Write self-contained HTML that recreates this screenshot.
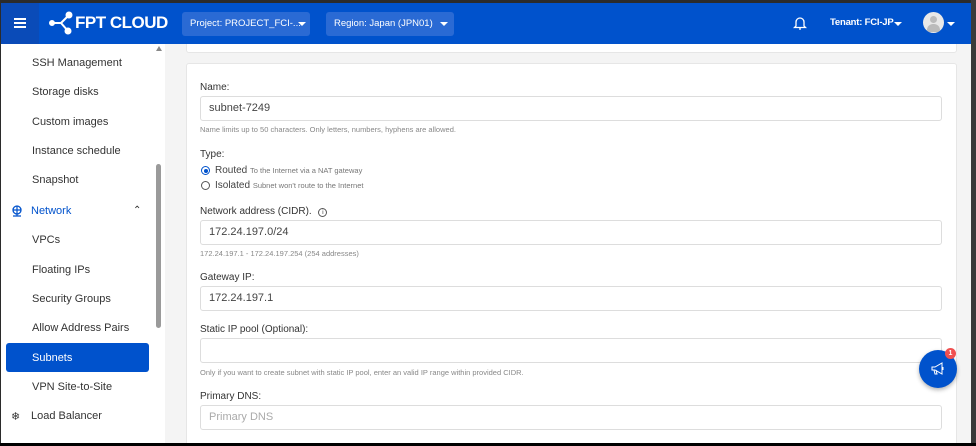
<!DOCTYPE html>
<html><head><style>
*{box-sizing:border-box;margin:0;padding:0}
html,body{width:976px;height:446px;overflow:hidden}
body{background:#2b2b2b;font-family:"Liberation Sans",sans-serif;position:relative}
.hdr{position:absolute;left:1px;top:3px;width:970px;height:41px;background:#0052cc}
.ham{position:absolute;left:0;top:0;width:38px;height:41px;background:#0a4bb8}
.ham i{position:absolute;left:13px;width:12px;height:2px;background:#fff}
.sel{position:absolute;top:9px;height:24px;background:#2a6ad4;border-radius:3px;color:#fff;font-size:9.5px;line-height:24px;padding-left:8px;white-space:nowrap;overflow:hidden}
.car{position:absolute;top:19px;width:0;height:0;border-left:4px solid transparent;border-right:4px solid transparent;border-top:4px solid #fff}
.side{position:absolute;left:1px;top:44px;width:164px;height:399px;background:#fff;overflow:hidden}
.side div{position:absolute;left:31px;font-size:11px;color:#333;white-space:nowrap}
.main{position:absolute;left:165px;top:44px;width:806px;height:399px;background:#f4f4f4;overflow:hidden}
.card{position:absolute;left:21px;width:771px;background:#fff;border:1px solid #e6e6e6;border-radius:3px}
.lbl{position:absolute;left:35px;font-size:10px;color:#333;white-space:nowrap}
.inp{position:absolute;left:35px;width:742px;height:25px;border:1px solid #ddd;border-radius:3px;font-size:11px;color:#444;line-height:23px;padding-left:8px}
.hint{position:absolute;left:35px;font-size:7.5px;color:#888;white-space:nowrap}
</style></head><body>
<div class="hdr">
 <div class="ham"><i style="top:15px"></i><i style="top:19px"></i><i style="top:23px"></i></div>
 <svg style="position:absolute;left:48px;top:8px" width="26" height="24" viewBox="0 0 26 24"><g stroke="#fff" stroke-width="2" fill="#fff"><line x1="4" y1="12" x2="12" y2="12"/><line x1="12" y1="12" x2="20" y2="4"/><line x1="12" y1="12" x2="19" y2="20"/><circle cx="3" cy="12" r="2"/><circle cx="20" cy="4" r="2.5"/><circle cx="19" cy="20" r="2.5"/></g></svg>
 <div style="position:absolute;left:74px;top:10px;color:#fff;font-weight:bold;font-size:17px;letter-spacing:-0.5px">FPT CLOUD</div>
 <div class="sel" style="left:181px;width:128px">Project: PROJECT_FCI-...</div><div class="car" style="left:297px"></div>
 <div class="sel" style="left:325px;width:128px">Region: Japan (JPN01)</div><div class="car" style="left:439px"></div>
 <svg style="position:absolute;left:792px;top:12px" width="14" height="16" viewBox="0 0 14 16"><path d="M3 11V7a4 4 0 018 0v4l1.5 1.5h-11z M6 14h2" stroke="#fff" stroke-width="1.3" fill="none"/></svg>
 <div style="position:absolute;left:829px;top:14px;color:#fff;font-weight:bold;font-size:9.5px;letter-spacing:-0.2px;white-space:nowrap">Tenant: FCI-JP</div><div class="car" style="left:893px;top:19px"></div>
 <div style="position:absolute;left:922px;top:9px;width:21px;height:21px;border-radius:50%;background:#e8e8e8;overflow:hidden"><div style="position:absolute;left:7px;top:4px;width:7px;height:7px;border-radius:50%;background:#bbb"></div><div style="position:absolute;left:4px;top:12px;width:13px;height:8px;border-radius:6px 6px 2px 2px;background:#bbb"></div></div><div class="car" style="left:946px;top:19px"></div>
</div>
<div class="side">
 <div style="top:13px">SSH Management</div>
 <div style="top:42px">Storage disks</div>
 <div style="top:72px">Custom images</div>
 <div style="top:101px">Instance schedule</div>
 <div style="top:130px">Snapshot</div>
 <svg style="position:absolute;left:10px;top:161px" width="12" height="12" viewBox="0 0 12 12"><circle cx="6" cy="5" r="4" stroke="#0052cc" stroke-width="1.3" fill="none"/><path d="M2 5h8M6 1v10M2 11h8" stroke="#0052cc" stroke-width="1.2"/></svg>
 <div style="top:161px;left:30px;color:#0052cc">Network</div>
 <div style="top:161px;left:132px;font-size:10px">&#8963;</div>
 <div style="top:190px">VPCs</div>
 <div style="top:220px">Floating IPs</div>
 <div style="top:249px">Security Groups</div>
 <div style="top:278px">Allow Address Pairs</div>
 <div style="position:absolute;left:5px;top:299px;width:143px;height:29px;background:#0052cc;border-radius:3px"></div>
 <div style="top:308px;color:#fff">Subnets</div>
 <div style="top:337px">VPN Site-to-Site</div>
 <div style="top:366px;left:10px;font-size:11px">&#10052;</div>
 <div style="top:366px;left:30px">Load Balancer</div>
 <div style="position:absolute;left:155px;top:2px;width:0;height:0;border-left:3px solid transparent;border-right:3px solid transparent;border-bottom:5px solid #888"></div>
 <div style="position:absolute;left:155px;top:120px;width:5px;height:164px;background:#9a9a9a;border-radius:3px"></div>
</div>
<div class="main">
 <div class="card" style="top:-4px;height:13px"></div>
 <div class="card" style="top:19px;height:400px"></div>
 <div class="lbl" style="top:38px">Name:</div>
 <div class="inp" style="top:52px">subnet-7249</div>
 <div class="hint" style="top:81px">Name limits up to 50 characters. Only letters, numbers, hyphens are allowed.</div>
 <div class="lbl" style="top:105px">Type:</div>
 <div style="position:absolute;left:36px;top:122px;width:9px;height:9px;border:1px solid #0052cc;border-radius:50%"><div style="margin:1.5px;width:4px;height:4px;border-radius:50%;background:#0052cc"></div></div>
 <div style="position:absolute;left:50px;top:121px;font-size:10px;color:#444;white-space:nowrap">Routed <span style="font-size:7.5px;color:#777">To the Internet via a NAT gateway</span></div>
 <div style="position:absolute;left:36px;top:137px;width:9px;height:9px;border:1px solid #555;border-radius:50%"></div>
 <div style="position:absolute;left:50px;top:136px;font-size:10px;color:#444;white-space:nowrap">Isolated <span style="font-size:7.5px;color:#777">Subnet won't route to the Internet</span></div>
 <div class="lbl" style="top:162px">Network address (CIDR). <span style="display:inline-block;width:9px;height:9px;border:1px solid #555;border-radius:50%;font-size:6px;text-align:center;line-height:8px;margin-left:4px">i</span></div>
 <div class="inp" style="top:176px">172.24.197.0/24</div>
 <div class="hint" style="top:205px">172.24.197.1 - 172.24.197.254 (254 addresses)</div>
 <div class="lbl" style="top:228px">Gateway IP:</div>
 <div class="inp" style="top:242px">172.24.197.1</div>
 <div class="lbl" style="top:280px">Static IP pool (Optional):</div>
 <div class="inp" style="top:294px"></div>
 <div class="hint" style="top:324px">Only if you want to create subnet with static IP pool, enter an valid IP range within provided CIDR.</div>
 <div class="lbl" style="top:347px">Primary DNS:</div>
 <div class="inp" style="top:361px;color:#aaa">Primary DNS</div>
 <div style="position:absolute;left:754px;top:306px;width:38px;height:38px;border-radius:50%;background:#0052cc;box-shadow:0 2px 4px rgba(0,0,0,.3)"><svg style="position:absolute;left:11px;top:12px" width="16" height="14" viewBox="0 0 16 14"><path d="M2 5h3l7-4v11l-7-4H2z M4 8l1 4h2l-1-4 M13 5v3" stroke="#fff" stroke-width="1" fill="none"/></svg></div>
 <div style="position:absolute;left:780px;top:304px;width:11px;height:11px;border-radius:50%;background:#f05050;color:#fff;font-size:7px;font-weight:bold;text-align:center;line-height:11px">1</div>
</div>
<div style="position:absolute;left:971px;top:0;width:5px;height:446px;background:#3a3a3a"></div>
<div style="position:absolute;left:0;top:443px;width:976px;height:3px;background:#000"></div>
</body></html>
